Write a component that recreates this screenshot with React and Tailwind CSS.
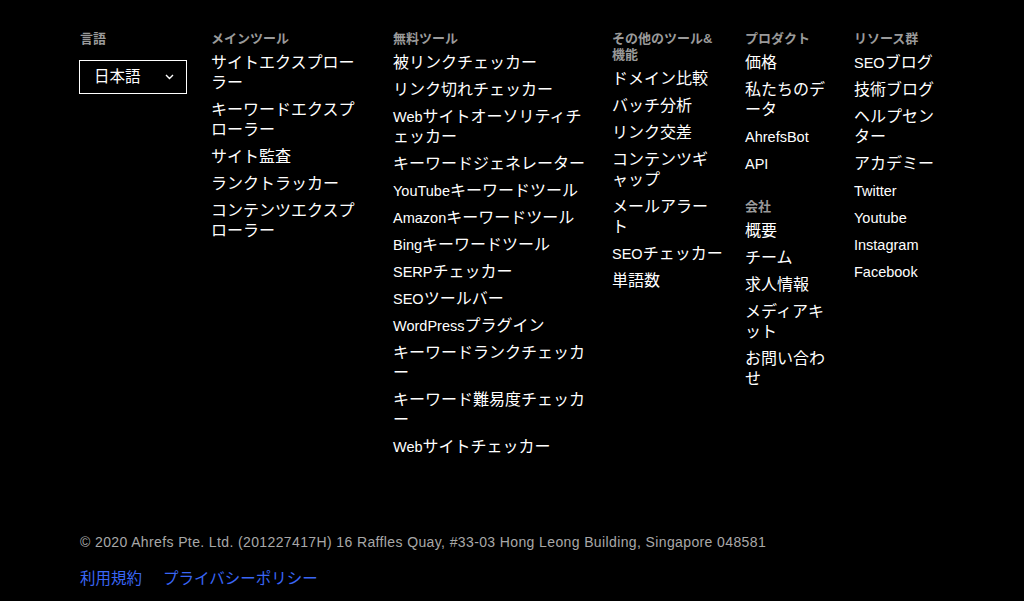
import React from "react";

const FONT = { fontFamily: '"Liberation Sans", "Noto Sans CJK JP", sans-serif' };

function Mixed({ text }) {
  const parts = text.match(/[A-Za-z0-9&.\s]+|[^A-Za-z0-9&.\s]+/g) || [];
  return (
    <>
      {parts.map((p, i) =>
        /[A-Za-z0-9]/.test(p) ? (
          <span key={i} className="text-[14.5px]">{p}</span>
        ) : (
          <span key={i}>{p}</span>
        )
      )}
    </>
  );
}

function Heading({ children }) {
  return (
    <div className="text-[13px] leading-[16px] font-bold text-[#9a9a9a] mb-[6px]">
      {children}
    </div>
  );
}

function Items({ items }) {
  return (
    <ul className="flex flex-col gap-[7px]">
      {items.map((t) => (
        <li key={t} className="text-[16px] leading-[20px] text-white">
          <Mixed text={t} />
        </li>
      ))}
    </ul>
  );
}

export default function App() {
  return (
    <div className="bg-black min-h-[601px] w-full px-[80px] pt-[31px] flex flex-col" style={FONT}>
      <div className="grid grid-cols-[131px_182px_219px_133px_109px_1fr]">
        <div className="w-[107px]">
          <Heading>言語</Heading>
          <div className="mt-[13px] w-[108px] h-[34px] -ml-[1px] border-[1.5px] border-white flex items-center justify-between pl-[14px] pr-[12px]">
            <span className="text-[15.5px] text-white">日本語</span>
            <svg width="9" height="6" viewBox="0 0 9 6" fill="none">
              <path d="M1 1l3.5 3.5L8 1" stroke="white" strokeWidth="1.4" />
            </svg>
          </div>
        </div>
        <div className="w-[158px]">
          <Heading>メインツール</Heading>
          <Items
            items={[
              "サイトエクスプローラー",
              "キーワードエクスプローラー",
              "サイト監査",
              "ランクトラッカー",
              "コンテンツエクスプローラー",
            ]}
          />
        </div>
        <div className="w-[195px]">
          <Heading>無料ツール</Heading>
          <Items
            items={[
              "被リンクチェッカー",
              "リンク切れチェッカー",
              "Webサイトオーソリティチェッカー",
              "キーワードジェネレーター",
              "YouTubeキーワードツール",
              "Amazonキーワードツール",
              "Bingキーワードツール",
              "SERPチェッカー",
              "SEOツールバー",
              "WordPressプラグイン",
              "キーワードランクチェッカー",
              "キーワード難易度チェッカー",
              "Webサイトチェッカー",
            ]}
          />
        </div>
        <div className="w-[108px]">
          <Heading>その他のツール&amp;機能</Heading>
          <ul className="flex flex-col gap-[7px]">
            {["ドメイン比較", "バッチ分析", "リンク交差", "コンテンツギャップ", "メールアラート"].map((t) => (
              <li key={t} className="text-[16px] leading-[20px] text-white">{t}</li>
            ))}
            <li className="text-[16px] leading-[20px] text-white whitespace-nowrap">
              <span className="text-[14.5px]">SEO</span>チェッカー
            </li>
            <li className="text-[16px] leading-[20px] text-white">単語数</li>
          </ul>
        </div>
        <div className="w-[85px]">
          <Heading>プロダクト</Heading>
          <Items items={["価格", "私たちのデータ", "AhrefsBot", "API"]} />
          <div className="mt-[25px]">
            <Heading>会社</Heading>
            <Items items={["概要", "チーム", "求人情報", "メディアキット", "お問い合わせ"]} />
          </div>
        </div>
        <div className="w-[85px]">
          <Heading>リソース群</Heading>
          <Items
            items={[
              "SEOブログ",
              "技術ブログ",
              "ヘルプセンター",
              "アカデミー",
              "Twitter",
              "Youtube",
              "Instagram",
              "Facebook",
            ]}
          />
        </div>
      </div>
      <div className="mt-[76px] text-[14px] tracking-[0.38px] leading-[18px] text-[#a8a8a8]">
        © 2020 Ahrefs Pte. Ltd. (201227417H) 16 Raffles Quay, #33-03 Hong Leong Building, Singapore 048581
      </div>
      <div className="mt-[18px] flex gap-[21px] text-[15.5px] leading-[20px] text-[#3a66f5]">
        <a href="#">利用規約</a>
        <a href="#">プライバシーポリシー</a>
      </div>
    </div>
  );
}
